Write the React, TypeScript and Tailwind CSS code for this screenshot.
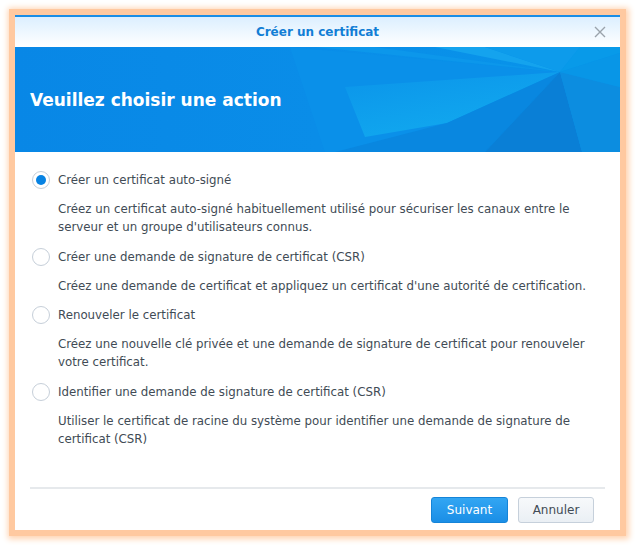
import React from "react";

const options = [
  {
    label: "Créer un certificat auto-signé",
    desc: "Créez un certificat auto-signé habituellement utilisé pour sécuriser les canaux entre le serveur et un groupe d'utilisateurs connus.",
  },
  {
    label: "Créer une demande de signature de certificat (CSR)",
    desc: "Créez une demande de certificat et appliquez un certificat d'une autorité de certification.",
  },
  {
    label: "Renouveler le certificat",
    desc: "Créez une nouvelle clé privée et une demande de signature de certificat pour renouveler votre certificat.",
  },
  {
    label: "Identifier une demande de signature de certificat (CSR)",
    desc: "Utiliser le certificat de racine du système pour identifier une demande de signature de certificat (CSR)",
  },
];

function Banner() {
  return (
    <div className="relative h-[105px] overflow-hidden bg-[#0889e7]">
      <svg
        className="absolute inset-0"
        width="605"
        height="105"
        viewBox="0 0 605 105"
      >
        <defs>
          <linearGradient id="bg" x1="0" y1="0" x2="1" y2="0">
            <stop offset="0" stopColor="#0887e6" />
            <stop offset="0.5" stopColor="#0a8de8" />
            <stop offset="1" stopColor="#0795ea" />
          </linearGradient>
          <linearGradient id="cy" x1="0" y1="0" x2="0.6" y2="1">
            <stop offset="0" stopColor="#0b95ea" />
            <stop offset="1" stopColor="#13aef0" />
          </linearGradient>
        </defs>
        <rect width="605" height="105" fill="url(#bg)" />
        <polygon points="275,0 545,25 420,80 330,105 310,105" fill="#0a90e9" />
        <polygon points="360,0 545,25 300,0" fill="#0c97eb" />
        <polygon points="420,0 545,25 470,0" fill="#14a3ee" />
        <polygon points="470,0 545,25 565,0" fill="#0d9beb" />
        <polygon points="565,0 605,0 605,6 545,25" fill="#089ae9" />
        <polygon points="330,40 545,25 432,76 350,90" fill="url(#cy)" opacity="0.85" />
        <polygon points="545,25 432,76 320,105 470,105" fill="#0987e0" />
        <polygon points="545,25 470,105 567,105" fill="#0a7fd6" />
        <polygon points="545,25 567,105 605,105 605,40" fill="#0c8de0" />
        <polygon points="545,25 605,6 605,40" fill="#0896e7" />
      </svg>
      <div className="relative flex h-full items-center pl-[15px] pt-[3px]">
        <span className="text-[17px] font-bold text-white">
          Veuillez choisir une action
        </span>
      </div>
    </div>
  );
}

function Radio({ checked }: { checked: boolean }) {
  return (
    <span className="flex h-[18px] w-[18px] shrink-0 items-center justify-center rounded-full border border-[#c6cfd9] bg-white">
      {checked && <span className="h-[10px] w-[10px] rounded-full bg-[#0783e3]" />}
    </span>
  );
}

export default function App() {
  return (
    <div
      className="min-h-[545px] bg-white pl-[15px] pt-[15px]"
      style={{ fontFamily: '"DejaVu Sans", Verdana, sans-serif' }}
    >
      <div className="flex h-[515px] w-[605px] flex-col bg-white shadow-[0_0_0_6px_#ffc9a0,1px_1px_6px_8px_#ffd3b0]">
        <div className="relative flex h-[32px] items-center justify-center border-t-2 border-[#1a8de5] bg-gradient-to-b from-[#dcefff] to-white">
          <span className="text-[12px] font-bold text-[#127ed5]">Créer un certificat</span>
          <svg
            className="absolute right-[14px] top-[9px]"
            width="12"
            height="12"
            viewBox="0 0 12 12"
          >
            <path d="M1 1L11 11M11 1L1 11" stroke="#9aa3ab" strokeWidth="1.4" />
          </svg>
        </div>
        <Banner />
        <div className="flex flex-1 flex-col px-[15px] pt-[19px] text-[11.8px] leading-[18px] text-[#414b55]">
          <div className="flex flex-col gap-[11.5px]">
            {options.map((o, i) => (
              <div key={i} className="flex flex-col gap-[11px]">
                <div className="flex items-center gap-[8px] pl-[2px]">
                  <Radio checked={i === 0} />
                  <span>{o.label}</span>
                </div>
                <p className="pl-[28px]">{o.desc}</p>
              </div>
            ))}
          </div>
          <div className="mt-auto flex justify-end gap-[10px] border-t-2 border-[#e6e9ec] pb-[7px] pr-[11px] pt-[8px]">
            <button className="h-[26px] w-[77px] rounded-[3px] border border-[#1584d8] bg-gradient-to-b from-[#32a6f3] to-[#1a8ee6] text-[12px] text-white">
              Suivant
            </button>
            <button className="h-[26px] w-[76px] rounded-[3px] border border-[#c6d0db] bg-gradient-to-b from-[#f7f9fb] to-[#eaeff4] text-[12px] text-[#414b55]">
              Annuler
            </button>
          </div>
        </div>
      </div>
    </div>
  );
}
